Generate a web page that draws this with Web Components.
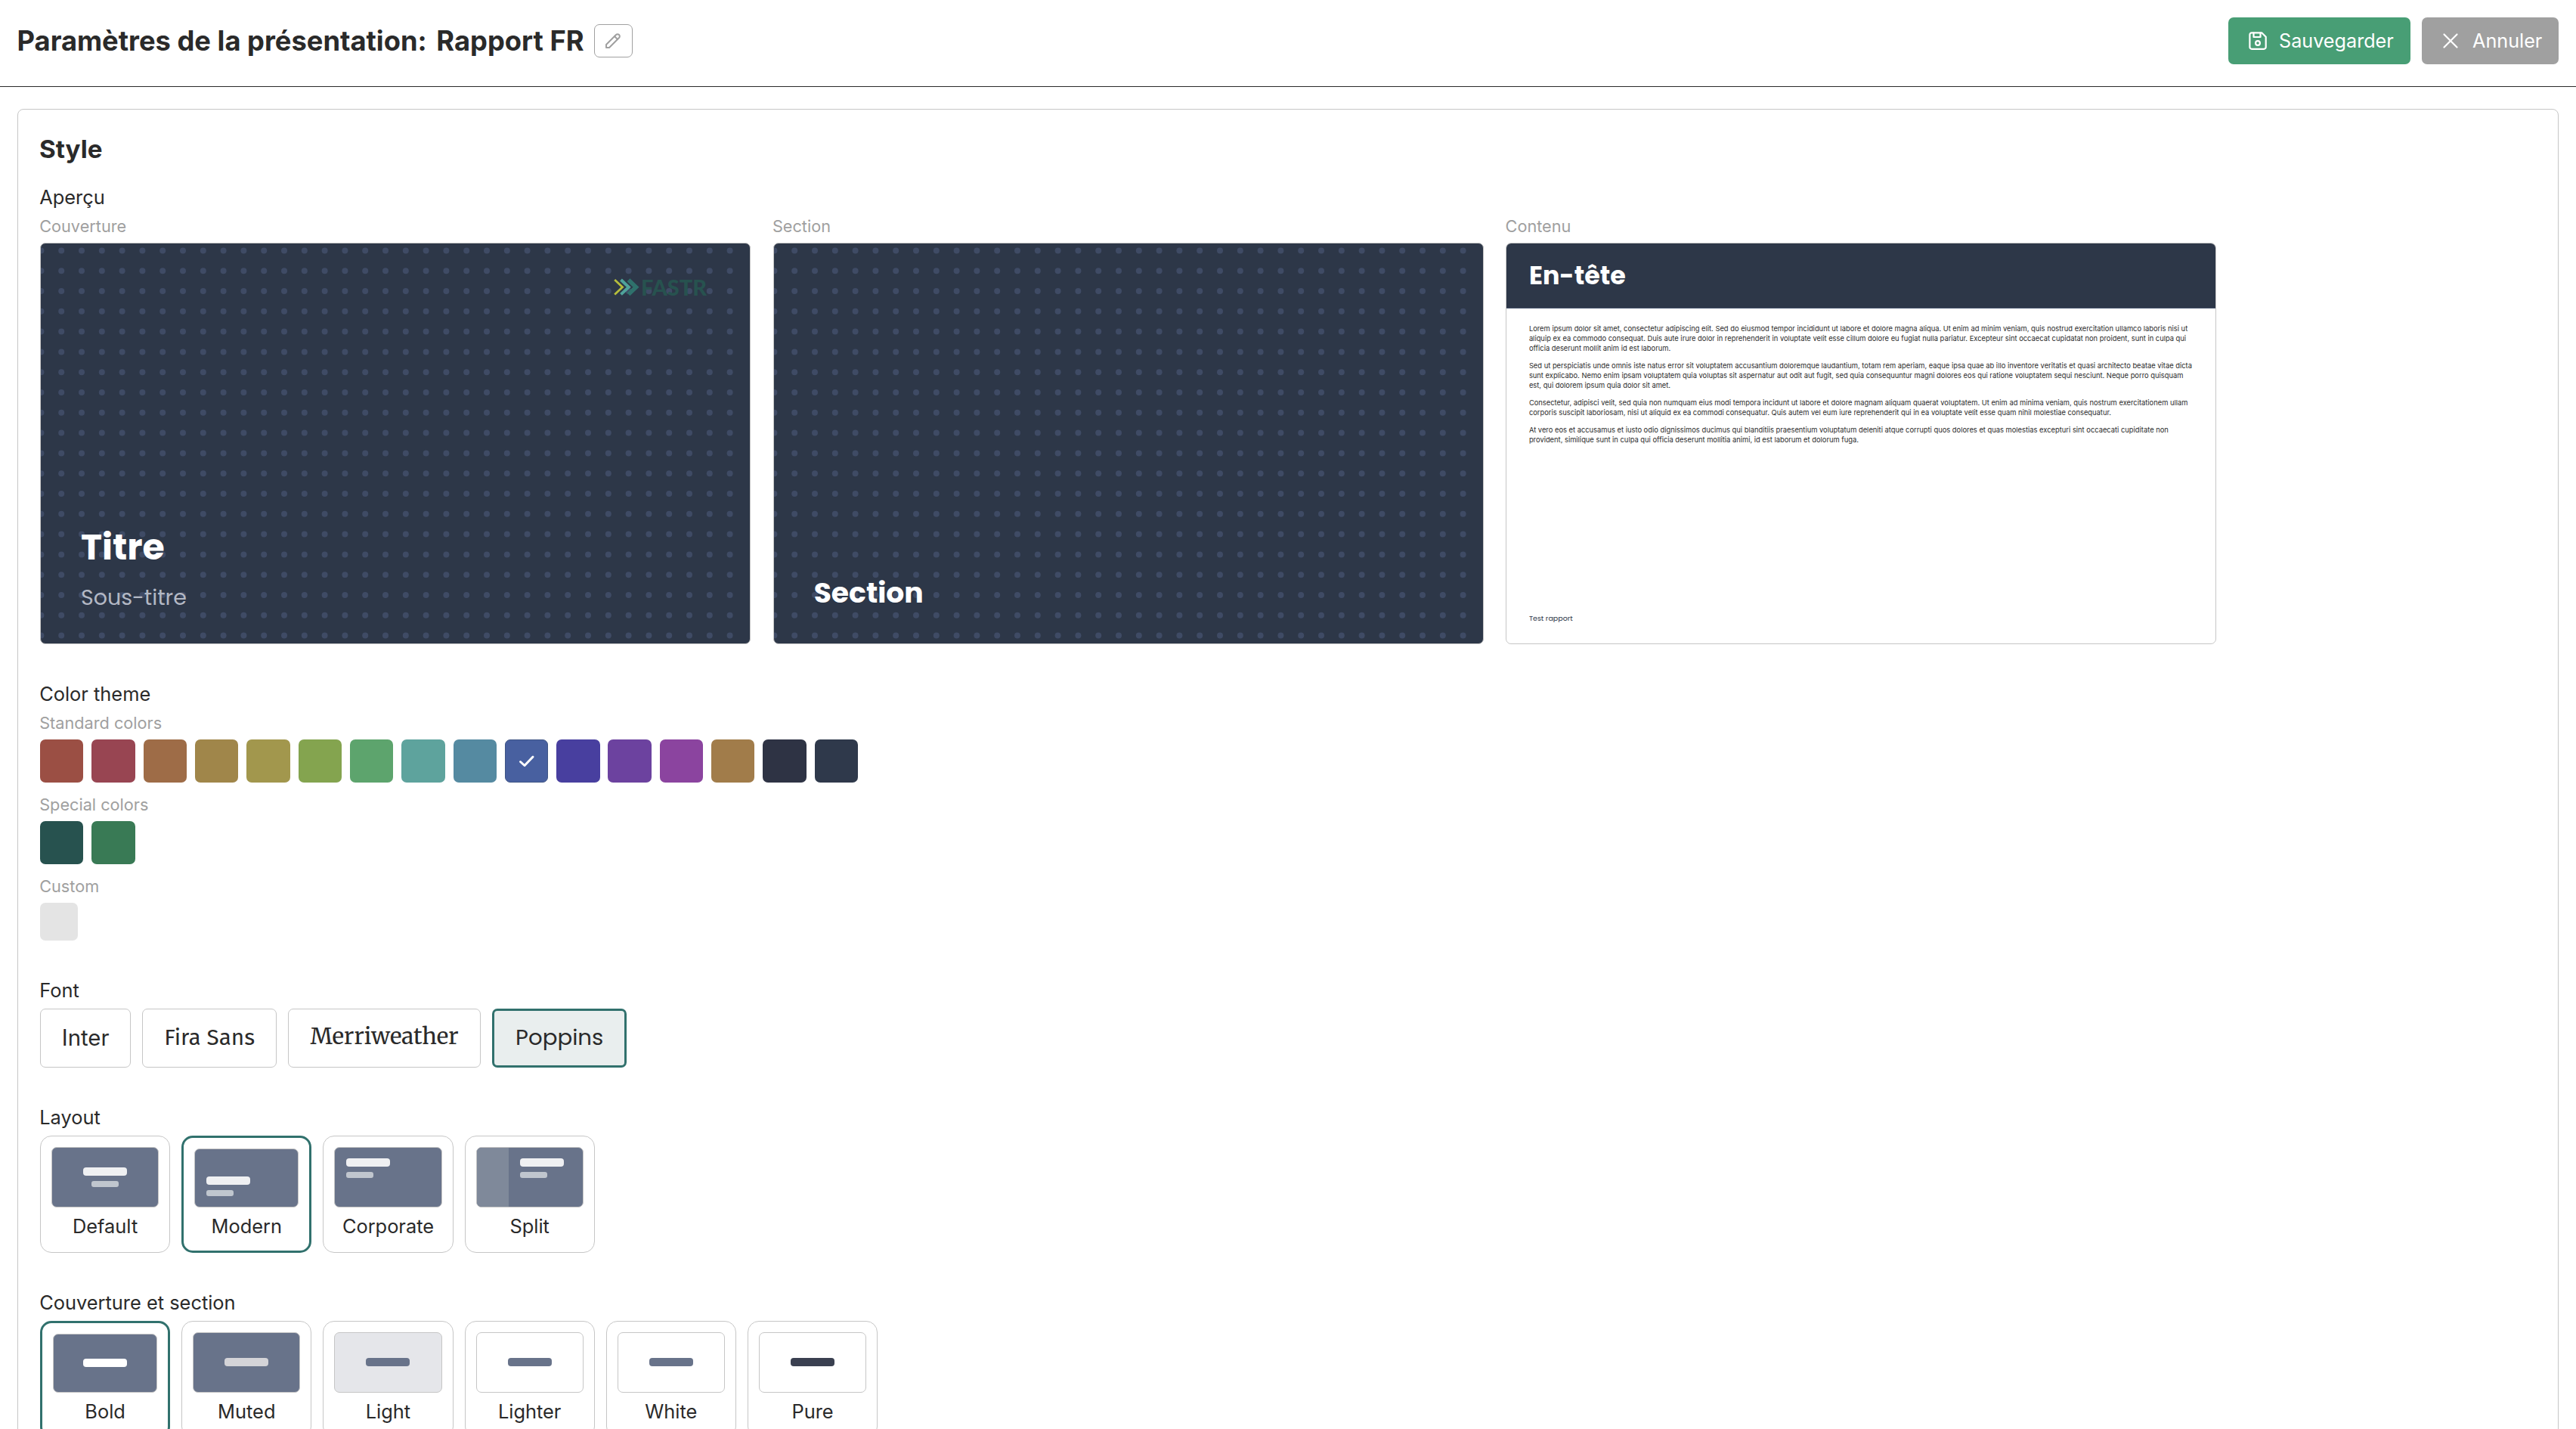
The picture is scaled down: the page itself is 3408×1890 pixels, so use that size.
<!DOCTYPE html>
<html lang="fr">
<head>
<meta charset="utf-8">
<title>Paramètres de la présentation</title>
<style>
  html, body {
    margin: 0;
    height: 1890px;
    overflow: hidden;
    background: #fff;
  }

  body {
    --border: #c6c6c6;
    --primary: #31716d;
    --slide: #2d3748;
    color: #2a2a2a;
    font-family: Inter, "Liberation Sans", sans-serif;
    font-size: 25.4px;
  }

  app-header b {
    margin-left: 4px;
    font-weight: 700;
  }
</style>
</head>
<body>
<app-header>
  <span slot="title">Paramètres de la présentation: <b>Rapport FR</b></span>
  <action-button slot="actions" icon="save" style="--width: 241px; --pad-left: 27px; --gap: 16px; --bg: #489e75">Sauvegarder</action-button>
  <action-button slot="actions" icon="close" style="--width: 181px; --pad-left: 26px; --gap: 17px; --bg: #a0a0a0">Annuler</action-button>
</app-header>

<settings-panel heading="Style">
  <field-group label="Aperçu" flat>
    <slide-preview label="Couverture" kind="cover" heading="Titre" subtitle="Sous-titre"></slide-preview>
    <slide-preview label="Section" kind="section" heading="Section"></slide-preview>
    <slide-preview label="Contenu" kind="content" heading="En-tête" footer="Test rapport">
      <p>Lorem ipsum dolor sit amet, consectetur adipiscing elit. Sed do eiusmod tempor incididunt ut labore et dolore magna aliqua. Ut enim ad minim veniam, quis nostrud exercitation ullamco laboris nisi ut<br>aliquip ex ea commodo consequat. Duis aute irure dolor in reprehenderit in voluptate velit esse cillum dolore eu fugiat nulla pariatur. Excepteur sint occaecat cupidatat non proident, sunt in culpa qui<br>officia deserunt mollit anim id est laborum.</p>
      <p>Sed ut perspiciatis unde omnis iste natus error sit voluptatem accusantium doloremque laudantium, totam rem aperiam, eaque ipsa quae ab illo inventore veritatis et quasi architecto beatae vitae dicta<br>sunt explicabo. Nemo enim ipsam voluptatem quia voluptas sit aspernatur aut odit aut fugit, sed quia consequuntur magni dolores eos qui ratione voluptatem sequi nesciunt. Neque porro quisquam<br>est, qui dolorem ipsum quia dolor sit amet.</p>
      <p>Consectetur, adipisci velit, sed quia non numquam eius modi tempora incidunt ut labore et dolore magnam aliquam quaerat voluptatem. Ut enim ad minima veniam, quis nostrum exercitationem ullam<br>corporis suscipit laboriosam, nisi ut aliquid ex ea commodi consequatur. Quis autem vel eum iure reprehenderit qui in ea voluptate velit esse quam nihil molestiae consequatur.</p>
      <p>At vero eos et accusamus et iusto odio dignissimos ducimus qui blanditiis praesentium voluptatum deleniti atque corrupti quos dolores et quas molestias excepturi sint occaecati cupiditate non<br>provident, similique sunt in culpa qui officia deserunt mollitia animi, id est laborum et dolorum fuga.</p>
    </slide-preview>
  </field-group>

  <field-group label="Color theme" flat stacked>
    <color-row label="Standard colors" selected="9" colors="#9b4f44 #984552 #9e6c47 #a0864a #a2974d #84a44f #5da46d #5ea39d #558aa1 #4860a0 #483f9f #6c429f #8b449f #a17c4a #2e3344 #2f394b"></color-row>
    <color-row label="Special colors" colors="#27524f #397a55"></color-row>
    <color-row label="Custom" colors="#e4e4e4" small></color-row>
  </field-group>

  <field-group label="Font">
    <font-option style="width: 120.3px; font-size: 29.4px; --lift: 2px">Inter</font-option>
    <font-option style="width: 177.6px; font-family: 'Fira Sans', 'Open Sans', sans-serif; font-size: 29.7px; --lift: 2.5px">Fira Sans</font-option>
    <font-option style="width: 255.3px; font-family: Merriweather, 'DejaVu Serif', serif; font-size: 29.6px; --lift: 5.5px">Merriweather</font-option>
    <font-option selected style="width: 178px; font-family: Poppins, Inter, sans-serif; font-size: 29.2px; --lift: 3px">Poppins</font-option>
  </field-group>

  <field-group label="Layout">
    <tile-option kind="default">Default</tile-option>
    <tile-option kind="modern" selected>Modern</tile-option>
    <tile-option kind="corporate">Corporate</tile-option>
    <tile-option kind="split">Split</tile-option>
  </field-group>

  <field-group label="Couverture et section">
    <tile-option kind="bar" selected style="--bar: #fff">Bold</tile-option>
    <tile-option kind="bar" style="--bar: #d4d4d8">Muted</tile-option>
    <tile-option kind="bar" style="--thumb: #e5e6ea; --bar: #68738a">Light</tile-option>
    <tile-option kind="bar" style="--thumb: #fff; --bar: #68738a">Lighter</tile-option>
    <tile-option kind="bar" style="--thumb: #fff; --bar: #68738a">White</tile-option>
    <tile-option kind="bar" style="--thumb: #fff; --bar: #3a4050">Pure</tile-option>
  </field-group>
</settings-panel>

<script>
class BaseElement extends HTMLElement {
  constructor() {
    super();
    this.attachShadow({mode: 'open'});
  }

  connectedCallback() {
    this.shadowRoot.innerHTML = this.render();
  }

  attr(name) {
    return this.getAttribute(name) || '';
  }
}

class AppHeader extends BaseElement {
  render() {
    return `
      <style>
        :host {
          display: flex;
          align-items: center;
          box-sizing: border-box;
          height: 115px;
          padding: 0 23px 6px;
          border-bottom: 1px solid #2a2a2a;
        }
        h1 {
          margin: 0 0 0 -0.5px;
          font-size: 36.3px;
          font-weight: 700;
          line-height: 50px;
          white-space: nowrap;
        }
        .edit {
          display: flex;
          align-items: center;
          justify-content: center;
          box-sizing: border-box;
          width: 51px;
          height: 44px;
          margin-left: 13px;
          padding: 0;
          border: 1px solid #a0a0a0;
          border-radius: 7px;
          background: #fff;
          color: #a0a0a0;
        }
        .actions {
          display: flex;
          gap: 15px;
          margin-left: auto;
        }
      </style>
      <h1><slot name="title"></slot></h1>
      <button class="edit" aria-label="Modifier">
        <svg width="24" height="24" viewBox="0 0 24 24" fill="none" stroke="currentColor" stroke-width="2" stroke-linecap="round" stroke-linejoin="round">
          <path d="M3 21v-4L16 4a2.8 2.8 0 0 1 4 4L7 21H3"/>
          <path d="M14 6l4 4"/>
        </svg>
      </button>
      <div class="actions"><slot name="actions"></slot></div>
    `;
  }
}

const ICONS = {
  save: `
    <path d="M4 1.3h13.2l5.5 5.5v13.4a2.6 2.6 0 0 1-2.6 2.6H4a2.6 2.6 0 0 1-2.6-2.6V3.9A2.6 2.6 0 0 1 4 1.3z"/>
    <circle cx="12" cy="15" r="2.9"/>
    <path d="M6.5 1.5V7h9V1.5"/>`,
  close: '<path d="M3.5 3.5l17 17M20.5 3.5l-17 17"/>'
};

class ActionButton extends BaseElement {
  render() {
    return `
      <style>
        :host {
          display: flex;
          align-items: center;
          gap: var(--gap);
          box-sizing: border-box;
          width: var(--width);
          height: 62px;
          padding-left: var(--pad-left);
          border-radius: 7px;
          background: var(--bg);
          color: #fff;
          font-size: 25.2px;
          white-space: nowrap;
          cursor: pointer;
        }
      </style>
      <svg width="24" height="24" viewBox="0 0 24 24" fill="none" stroke="currentColor" stroke-width="2.2" stroke-linecap="round" stroke-linejoin="round">${ICONS[this.attr('icon')]}</svg>
      <span><slot></slot></span>
    `;
  }
}

class SettingsPanel extends BaseElement {
  render() {
    return `
      <style>
        :host {
          display: flex;
          flex-direction: column;
          box-sizing: border-box;
          margin: 29px 23px 23px;
          padding: 30px 29px 48px;
          border: 1px solid var(--border);
          border-radius: 8px;
        }
        h2 {
          margin: 0 0 23px -1px;
          font-size: 33.2px;
          font-weight: 700;
          line-height: 45px;
        }
        .groups {
          display: flex;
          flex-direction: column;
          gap: 48px;
        }
      </style>
      <h2>${this.attr('heading')}</h2>
      <div class="groups"><slot></slot></div>
    `;
  }
}

class FieldGroup extends BaseElement {
  render() {
    return `
      <style>
        :host {
          display: block;
        }
        .label {
          margin: 0 0 6px -0.8px;
          line-height: 36px;
        }
        .items {
          display: flex;
          gap: 15px;
        }
        :host([flat]) .label {
          margin-bottom: 4px;
        }
        :host([flat]) .items {
          gap: 29.7px;
        }
        :host([stacked]) .items {
          flex-direction: column;
          gap: 13px;
        }
      </style>
      <div class="label">${this.attr('label')}</div>
      <div class="items"><slot></slot></div>
    `;
  }
}

class SlidePreview extends BaseElement {
  dots() {
    const step = 26.8;
    let out = '';
    for (let row = 0; row < 20; row++) {
      for (let col = 0; col < 35; col++) {
        out += `<circle cx="${(0.4 + col * step).toFixed(1)}" cy="${(9.4 + row * step).toFixed(1)}" r="4"/>`;
      }
    }
    return `<svg class="dots" width="938" height="529" fill="#3f4b65">${out}</svg>`;
  }

  logo() {
    return `
      <div class="logo">
        <svg width="34" height="24" viewBox="0 0 34 24" fill="none">
          <path d="M1.2 2l10.3 9.7-10.3 9.7" stroke="#b5bd3c" stroke-width="2.8"/>
          <path d="M9.5 2l10.3 9.7-10.3 9.7" stroke="#4fa39b" stroke-width="4"/>
          <path d="M19.5 2.2l10 9.5-10 9.5" stroke="#2f716c" stroke-width="5.5"/>
        </svg>
        <span>FASTR</span>
      </div>`;
  }

  slide() {
    const heading = this.attr('heading');
    if (this.attr('kind') === 'content') {
      return `
        <div class="bar">${heading}</div>
        <div class="text"><slot></slot></div>
        <div class="footer">${this.attr('footer')}</div>`;
    }
    if (this.attr('kind') === 'cover') {
      return `${this.dots()}${this.logo()}
        <div class="heading">${heading}</div>
        <div class="subtitle">${this.attr('subtitle')}</div>`;
    }
    return `${this.dots()}<div class="heading">${heading}</div>`;
  }

  render() {
    return `
      <style>
        :host {
          display: block;
          width: 940px;
        }
        .label {
          margin: 0 0 6px -0.8px;
          color: #a0a0a0;
          font-size: 21.7px;
          line-height: 32px;
        }
        .slide {
          position: relative;
          display: flex;
          flex-direction: column;
          justify-content: flex-end;
          box-sizing: border-box;
          height: 531px;
          padding: 0 53px 43px;
          overflow: hidden;
          border: 1px solid var(--border);
          border-radius: 7px;
          background: var(--slide);
          color: #fff;
          font-family: Poppins, Inter, sans-serif;
        }
        .dots {
          position: absolute;
          top: 0;
          left: 0;
        }
        .logo {
          position: absolute;
          top: 46px;
          right: 57px;
          display: flex;
          align-items: center;
          gap: 2px;
          color: #27524f;
          font: 900 28.9px/24px Lato, sans-serif;
        }
        .heading {
          position: relative;
          font-size: 47.4px;
          font-weight: 700;
          line-height: 56px;
        }
        .section .heading {
          font-size: 37.7px;
          line-height: 48px;
        }
        .subtitle {
          position: relative;
          margin-top: 20px;
          color: #b3b8c4;
          font-size: 28.5px;
          line-height: 36px;
        }
        .content {
          justify-content: flex-start;
          padding: 0 0 27px;
          background: #fff;
        }
        .bar {
          box-sizing: border-box;
          height: 86px;
          padding: 0 29.5px;
          border-bottom: 1px solid #44526b;
          background: var(--slide);
          font-size: 33.3px;
          font-weight: 700;
          line-height: 85px;
        }
        .text {
          flex: 1;
          padding: 19.5px 29.5px 0;
          color: #2a2a2a;
          font: 9.36px/13.2px Inter, sans-serif;
          white-space: nowrap;
        }
        ::slotted(p) {
          margin: 0 0 9.5px;
        }
        .footer {
          padding-left: 29.5px;
          color: var(--slide);
          font-size: 9.5px;
          line-height: 13px;
        }
      </style>
      <div class="label">${this.attr('label')}</div>
      <div class="slide ${this.attr('kind')}">${this.slide()}</div>
    `;
  }
}

class ColorRow extends BaseElement {
  render() {
    const selected = this.hasAttribute('selected') ? Number(this.attr('selected')) : -1;
    const check = '<svg width="22" height="18" viewBox="0 0 22 18" fill="none" stroke="#fff" stroke-width="3" stroke-linecap="round" stroke-linejoin="round"><path d="M2.5 9.5L8 14.5 19 3"/></svg>';
    const swatches = this.attr('colors').split(' ').map((color, i) => `
      <button class="swatch ${i === selected ? 'selected' : ''}" style="background: ${color}">${i === selected ? check : ''}</button>`).join('');
    return `
      <style>
        :host {
          display: block;
        }
        .label {
          margin: 0 0 6px -0.8px;
          color: #a0a0a0;
          font-size: 21.7px;
          line-height: 32px;
        }
        .row {
          display: flex;
          gap: 10.93px;
        }
        .swatch {
          display: flex;
          align-items: center;
          justify-content: center;
          box-sizing: border-box;
          width: 57.4px;
          height: 57px;
          padding: 0;
          border: 0;
          border-radius: 7px;
        }
        .selected {
          border: 1px solid #3f5585;
        }
        :host([small]) .swatch {
          width: 50px;
          height: 50px;
        }
      </style>
      <div class="label">${this.attr('label')}</div>
      <div class="row">${swatches}</div>
    `;
  }
}

class FontOption extends BaseElement {
  render() {
    return `
      <style>
        :host {
          display: flex;
          align-items: center;
          justify-content: center;
          box-sizing: border-box;
          height: 78px;
          border: 1px solid var(--border);
          border-radius: 7px;
          white-space: nowrap;
          cursor: pointer;
        }
        :host([selected]) {
          border: 3px solid var(--primary);
          background: #e9eeee;
        }
        span {
          padding-bottom: var(--lift, 0);
        }
      </style>
      <span><slot></slot></span>
    `;
  }
}

class TileOption extends BaseElement {
  render() {
    return `
      <style>
        :host {
          display: flex;
          flex-direction: column;
          box-sizing: border-box;
          width: 172.2px;
          height: 155px;
          padding: 14px;
          border: 1px solid var(--border);
          border-radius: 15px;
          text-align: center;
          cursor: pointer;
        }
        :host([selected]) {
          border: 3px solid var(--primary);
        }
        .thumb {
          display: flex;
          box-sizing: border-box;
          aspect-ratio: 16 / 9;
          overflow: hidden;
          border: 1px solid var(--border);
          border-radius: 7px;
          background: var(--thumb, #68738a);
        }
        .lines {
          display: flex;
          flex: 1;
          flex-direction: column;
          justify-content: center;
          align-items: center;
          gap: 7px;
          padding: 14px 15px;
        }
        .modern .lines {
          justify-content: flex-end;
          align-items: flex-start;
        }
        .corporate .lines, .split .lines {
          justify-content: flex-start;
          align-items: flex-start;
        }
        .side {
          width: 30%;
          background: #7f899a;
        }
        .long {
          width: 58px;
          height: 11px;
          border-radius: 4px;
          background: var(--bar, #eff0f2);
        }
        .short {
          width: 36px;
          height: 8px;
          border-radius: 3px;
          background: #c0c6ce;
        }
        .name {
          margin-top: 8px;
          line-height: 34px;
        }
      </style>
      <div class="thumb ${this.attr('kind')}">
        ${this.attr('kind') === 'split' ? '<div class="side"></div>' : ''}
        <div class="lines">
          <div class="long"></div>
          ${this.attr('kind') === 'bar' ? '' : '<div class="short"></div>'}
        </div>
      </div>
      <div class="name"><slot></slot></div>
    `;
  }
}

customElements.define('app-header', AppHeader);
customElements.define('action-button', ActionButton);
customElements.define('settings-panel', SettingsPanel);
customElements.define('field-group', FieldGroup);
customElements.define('slide-preview', SlidePreview);
customElements.define('color-row', ColorRow);
customElements.define('font-option', FontOption);
customElements.define('tile-option', TileOption);
</script>
</body>
</html>
